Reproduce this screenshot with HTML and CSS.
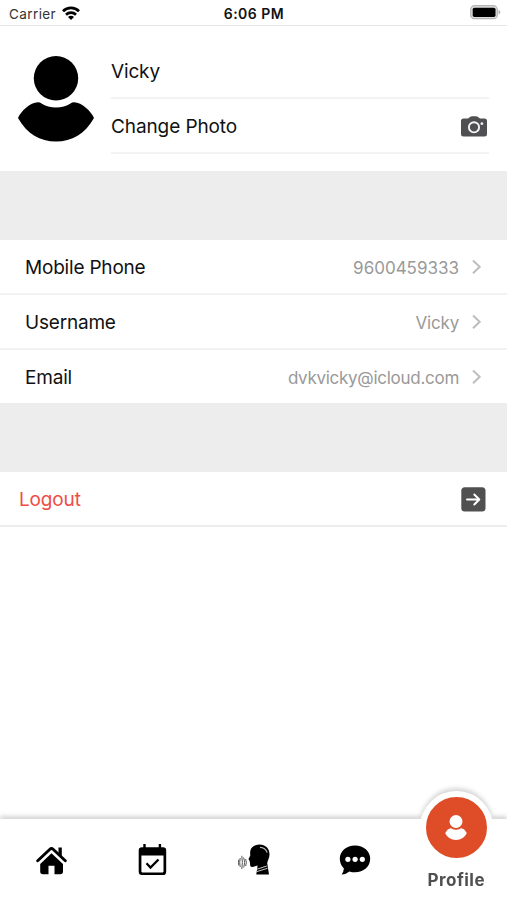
FILE: index.html
```html
<!DOCTYPE html>
<html lang="en">
<head>
<meta charset="utf-8">
<title>Profile</title>
<link rel="stylesheet" href="styles.css">
</head>
<body>
<header class="status">
  <div class="carrier"><span>Carrier</span>
    <svg width="18" height="14" viewBox="0 0 18 14" fill="none" stroke="#000" stroke-width="2.700"><path d="M1 5.200a11.300 11.300 0 0 1 16 0M4 8.700a7.100 7.100 0 0 1 10 0"/><path d="M9 14 6 11a4.200 4.200 0 0 1 6 0Z" fill="#000" stroke="none"/></svg>
  </div>
  <span class="time">6:06 PM</span>
  <svg class="battery" width="31" height="15" viewBox="0 0 31 15"><rect x=".7" y=".7" width="26.600" height="13" rx="3.800" fill="#ddd" stroke="#b5b5b5" stroke-width="1.200"/><rect x="2.700" y="2.700" width="22.800" height="9.200" rx="1.600"/><path d="M28.600 4.800q3.200 2.300 0 4.800z" fill="#aaa"/></svg>
</header>
<main>
  <section class="profile">
    <svg class="avatar" width="76" height="86" viewBox="0 0 76 86"><circle cx="38" cy="22.200" r="22.200"/><path d="M0 62C3 55 12 46.500 20 46.200q2 0 3.500 1.200 6 4 14.500 4t14.500-4Q54 46.200 56 46.200C64 46.500 73 55 76 62 67 78 54 85.500 38 85.500S9 78 0 62Z"/></svg>
    <div class="fields">
      <div class="field"><span>Vicky</span></div>
      <div class="field"><span class="change">Change Photo</span>
        <svg class="camera" width="26" height="21" viewBox="0 0 26 21"><path fill="#505052" d="M2.500 2.500H7L9.300.7Q10 .2 11 .2h4q1 0 1.700.5L19 2.500h4.500Q26 2.500 26 5v13q0 2.500-2.500 2.500h-21Q0 20.500 0 18V5q0-2.500 2.500-2.500Z"/><circle cx="13" cy="11.300" r="5.100" fill="none" stroke="#f5f5f5" stroke-width="1.900"/><circle cx="20.900" cy="7.700" r="1.400" fill="#eee"/></svg>
      </div>
    </div>
  </section>
  <section class="details">
    <div class="row"><span class="label">Mobile Phone</span><span class="value">9600459333</span><svg class="chevron" width="9" height="16" viewBox="0 0 9 16"><path d="m1 1.500 6.700 6.300L1 14.300"/></svg></div>
    <div class="row"><span class="label">Username</span><span class="value name">Vicky</span><svg class="chevron" width="9" height="16" viewBox="0 0 9 16"><path d="m1 1.500 6.700 6.300L1 14.300"/></svg></div>
    <div class="row"><span class="label">Email</span><span class="value email">dvkvicky@icloud.com</span><svg class="chevron" width="9" height="16" viewBox="0 0 9 16"><path d="m1 1.500 6.700 6.300L1 14.300"/></svg></div>
  </section>
  <div class="logout"><span>Logout</span>
    <svg width="25" height="25" viewBox="0 0 25 25"><rect x=".3" y=".3" width="24.200" height="24.200" rx="3.500" fill="#505050"/><path d="M6 12.500h12M13.300 7.500l5 5-5 5" fill="none" stroke="#fff" stroke-width="2" stroke-linecap="round" stroke-linejoin="round"/></svg>
  </div>
</main>
<nav class="tabs">
  <a class="tab home"><svg width="31" height="30" viewBox="0 0 31 30"><path d="M1.700 15.800 13.900 4.200q1.600-1.500 3.200 0l12.200 11.600" fill="none" stroke="#000" stroke-width="2.900" stroke-linecap="round"/><path d="M22.500 2.500h3.300v9l-3.300-3zM15.500 8.200 27 19v7.500q0 2.800-2.800 2.800H18.500v-8.500h-6v8.500H7q-2.800 0-2.800-2.800V19z"/></svg></a>
  <a class="tab"><svg width="29" height="31" viewBox="0 0 29 31"><path fill-rule="evenodd" d="M5.300 0h2.400v3.200h13V0h2.400v3.200H25q3.200 0 3.200 3.200v21Q28.200 31 25 31H4Q.7 31 .7 27.500V6.400Q.7 3.200 4 3.200h1.300zM3.400 11.600v16q0 .8.800.8h20.500q.8 0 .8-.8v-16z"/><path d="m8.500 19.300 4 4.200 8-8" fill="none" stroke="#000" stroke-width="2.300"/></svg></a>
  <a class="tab voice"><svg width="32" height="31" viewBox="0 0 32 31"><path d="M12.200 10.200C11.500 4 16 .6 21.500.6c6 0 10.200 4.200 10 10-.1 3.500-1.700 5.800-2.300 8.300l1.800 11.600H18.300l1.300-9-4.200 1.300c-1.500.5-2.800.3-3.200-1.200l-.4-4-1.300-2.700 1.800-3.300z"/><path d="M22 3.400q5.300.2 7.200 5.200" fill="none" stroke="#bbb" stroke-width="1.200"/><path d="m19 25.200 9.800-3.200M18.500 27.700l11-3.400" fill="none" stroke="#ddd" stroke-width=".9"/><path d="M7.600 15q1.700 3.500 0 7M5.700 13.500q2 5 0 10M3.800 11.800q1.200 6.700 0 13.200M2.200 14q-1 4.500 0 9M.8 15.500q-.8 3 0 6" fill="none" stroke="#444" stroke-width=".9"/></svg></a>
  <a class="tab"><svg width="32" height="30" viewBox="0 0 32 30"><path d="M16 .5c8.600 0 15.200 5.500 15.200 13.300S24.600 27.300 16 27.300q-3 0-5.600-.9Q7 29.300 2.600 29.500q2-2.500 2.300-6Q.8 19.500.8 13.800C.8 6 7.400.5 16 .5Z"/><g fill="#fff"><circle cx="8.900" cy="14.300" r="2.600"/><circle cx="16.100" cy="14.300" r="2.600"/><circle cx="23.300" cy="14.300" r="2.600"/></g></svg></a>
  <a class="tab active"><span class="bubble"><svg width="22" height="26" viewBox="0 0 22 26"><g fill="#fff"><circle cx="11" cy="6.500" r="6.500"/><path d="M.2 18.300Q2 13.900 6 13.200q5 3 10 0 4 .7 5.800 5.100Q18.500 25 11 25T.2 18.300Z"/></g></svg></span><span class="caption">Profile</span></a>
</nav>
</body>
</html>
```
FILE: styles.css
```css
* { box-sizing: border-box; }
body { margin: 0; height: 900px; overflow: hidden; display: flex; flex-direction: column; background: #fff; color: #111; font-family: Inter, "Liberation Sans", sans-serif; font-size: 19px; letter-spacing: -.15px; }
svg { display: block; flex: none; }
.status { height: 26px; padding: 0 6px 0 9px; display: grid; grid-template-columns: 1fr auto 1fr; align-items: center; border-bottom: 1px solid #e6e6e6; font-size: 13.5px; }
.carrier { display: flex; align-items: center; gap: 6px; padding-top: 2px; color: #333; letter-spacing: .4px; }
.carrier svg { margin-top: -2px; }
.time { padding-top: 2px; font-weight: 600; font-size: 14px; letter-spacing: .5px; transform: translateX(-1px); }
.battery { justify-self: end; }
main { flex: 1; }
.profile { height: 145px; padding: 18px 18px 0; display: flex; gap: 17px; }
.avatar { margin-top: 12px; }
.fields { flex: 1; }
.field { height: 55px; display: flex; align-items: center; justify-content: space-between; border-bottom: 2px solid #f3f3f3; padding: 2px 2px 0 0; }
.change { letter-spacing: -.1px; }
.details { border: solid #ededed; border-width: 69px 0; }
.row { height: 55px; display: flex; align-items: center; padding: 0 26px; border-bottom: 2px solid #f2f2f2; }
.row:last-child { height: 53px; border-bottom: 0; }
.label { padding-top: 2px; margin-left: -1px; letter-spacing: -.2px; }
.value { margin-left: auto; margin-right: 13px; padding-top: 2px; color: #999; font-size: 17px; letter-spacing: 0; }
.name { letter-spacing: -.2px; }
.email { letter-spacing: -.28px; }
.chevron { fill: none; stroke: #bdbdbd; stroke-width: 2; }
.logout { height: 55px; padding: 1px 21px 0 19px; display: flex; align-items: center; justify-content: space-between; color: #ee4d46; border-bottom: 2px solid #ededed; }
.logout span { padding-top: 1px; }
.tabs { height: 81px; display: grid; grid-template-columns: repeat(5, 1fr); background: #fff; filter: drop-shadow(0 -3px 2px rgba(0, 0, 0, .16)); }
.tab { display: flex; align-items: center; justify-content: center; }
.home, .voice { padding-left: 2px; }
.active { flex-direction: column; justify-content: flex-start; }
.bubble { flex: none; width: 73px; height: 73px; margin-top: -28px; border: 6px solid #fff; border-radius: 50%; background: #de4c28; display: flex; align-items: center; justify-content: center; }
.caption { margin-top: 5px; font-size: 17px; line-height: 22px; font-weight: 700; letter-spacing: .45px; color: #505050; }
```
